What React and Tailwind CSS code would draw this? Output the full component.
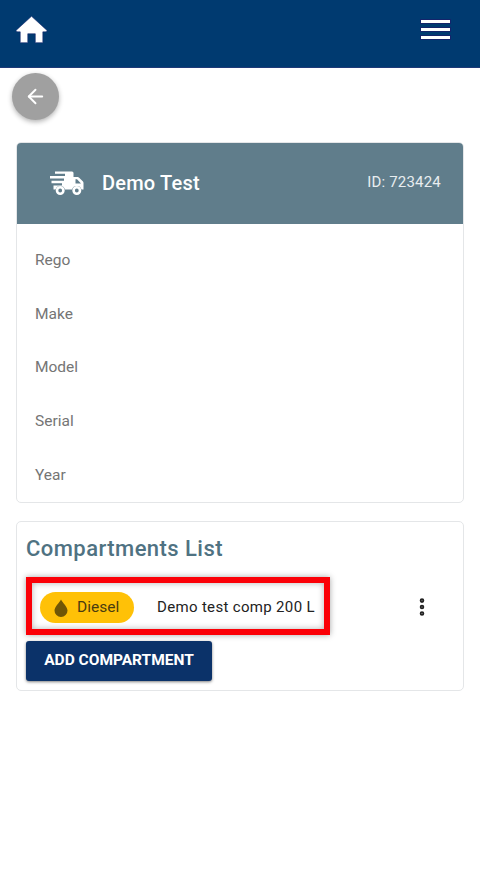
import React from "react";
import { ArrowLeft, EllipsisVertical } from "lucide-react";

const fields = ["Rego", "Make", "Model", "Serial", "Year"];

const HomeIcon = () => (
  <svg width="32" height="29" viewBox="0 0 34 30" fill="#fff" stroke="#14246b" strokeWidth="0.6">
    <path d="M16.5 1 L33 16 Q33 17.5 31 17.5 L28.5 17.5 L28.5 29 L20.5 29 L20.5 19.5 L12.5 19.5 L12.5 29 L4.5 29 L4.5 17.5 L2 17.5 Q0 17.5 0 16 Z" />
  </svg>
);

const TruckIcon = () => (
  <svg width="34" height="26" viewBox="0 0 34 26" fill="#fff">
    <path d="M5 1.5 H22 Q23.5 1.5 23.5 3 V7 H27.5 Q28.5 7 29.2 7.7 L33 11.5 Q33.5 12 33.5 13 V19.5 H31.5 A5 5 0 0 0 22 19.5 H15 A5 5 0 0 0 5.5 19.5 H3.5 V15.5 H12 V13.2 H1.5 V10.8 H14 V8.5 H0 V6 H15 V3.8 H5 Z M25.5 9.3 V13.5 H31 L27 9.3 Z" />
    <circle cx="10.2" cy="20.5" r="3.2" fill="none" stroke="#fff" strokeWidth="2.6" />
    <circle cx="26.8" cy="20.5" r="3.2" fill="none" stroke="#fff" strokeWidth="2.6" />
  </svg>
);

const DropIcon = () => (
  <svg width="14" height="18" viewBox="0 0 14 18" fill="#6f5606">
    <path d="M7 0.5 C8.5 3.5 13.5 8 13.5 11.5 A6.5 6.5 0 0 1 0.5 11.5 C0.5 8 5.5 3.5 7 0.5 Z" />
  </svg>
);

export default function App() {
  return (
    <div className="w-[480px] h-[884px] bg-white font-['Roboto',sans-serif] overflow-hidden">
      <header className="h-[68px] bg-[#003a70] border-b border-[#1f3a78] flex items-center justify-between pl-[16px] pr-[30px] pb-[9px]">
        <HomeIcon />
        <div className="flex flex-col gap-[5px]">
          <span className="block w-[29px] h-[3px] bg-white shadow-[0_0_0_1px_#14246b]" />
          <span className="block w-[29px] h-[3px] bg-white shadow-[0_0_0_1px_#14246b]" />
          <span className="block w-[29px] h-[3px] bg-white shadow-[0_0_0_1px_#14246b]" />
        </div>
      </header>

      <div className="pt-[5px] pl-[12px]">
        <button className="w-[47px] h-[47px] rounded-full bg-[#a0a0a0] flex items-center justify-center shadow-[0_2px_5px_rgba(0,0,0,0.3)]">
          <ArrowLeft size={23} color="#fff" strokeWidth={2} />
        </button>
      </div>

      <div className="mx-[16px] mt-[22px] h-[361px] border border-[#e4e6e8] rounded-[5px] overflow-hidden">
        <div className="h-[81px] bg-[#607d8b] flex items-center pl-[33px] pr-[22px] pb-[2px] text-white">
          <TruckIcon />
          <span className="ml-[18px] text-[20px] font-medium tracking-[0.2px]">Demo Test</span>
          <span className="ml-auto text-[15px] tracking-[0.2px] text-[#e8edf0]">ID: 723424</span>
        </div>
        <div className="pt-[9.5px] pl-[18px]">
          {fields.map((f) => (
            <div key={f} className="h-[53.8px] flex items-center text-[15.5px] text-[#757575]">
              {f}
            </div>
          ))}
        </div>
      </div>

      <div className="mx-[16px] mt-[18px] h-[170px] border border-[#e4e6e8] rounded-[5px] px-[9px] pt-[13px]">
        <h2 className="text-[22px] leading-[28px] font-medium tracking-[0.45px] text-[#4f7282]">Compartments List</h2>
        <div className="mt-[14px] flex items-center">
          <div className="w-[304px] h-[58px] border-[6px] border-[#fb0007] shadow-[0_0_6px_rgba(0,0,0,0.35),inset_0_0_6px_rgba(0,0,0,0.3)] flex items-center pl-[8px] pt-[3px]">
            <div className="h-[31px] w-[94px] rounded-full bg-[#ffc107] flex items-center pl-[14px] gap-[9px] text-[15.5px] text-[#4a3c10]">
              <DropIcon />
              Diesel
            </div>
            <span className="ml-[23px] text-[15px] tracking-[0.33px] text-[#222] whitespace-nowrap">Demo test comp 200 L</span>
          </div>
          <EllipsisVertical size={22} color="#222" strokeWidth={3} className="ml-[81px] mt-[2px]" />
        </div>
        <button className="mt-[6px] w-[186px] h-[40px] rounded-[3px] bg-[#0b3269] text-white text-[15.5px] font-bold shadow-[0_1px_3px_rgba(0,0,0,0.5)]">
          ADD COMPARTMENT
        </button>
      </div>
    </div>
  );
}
